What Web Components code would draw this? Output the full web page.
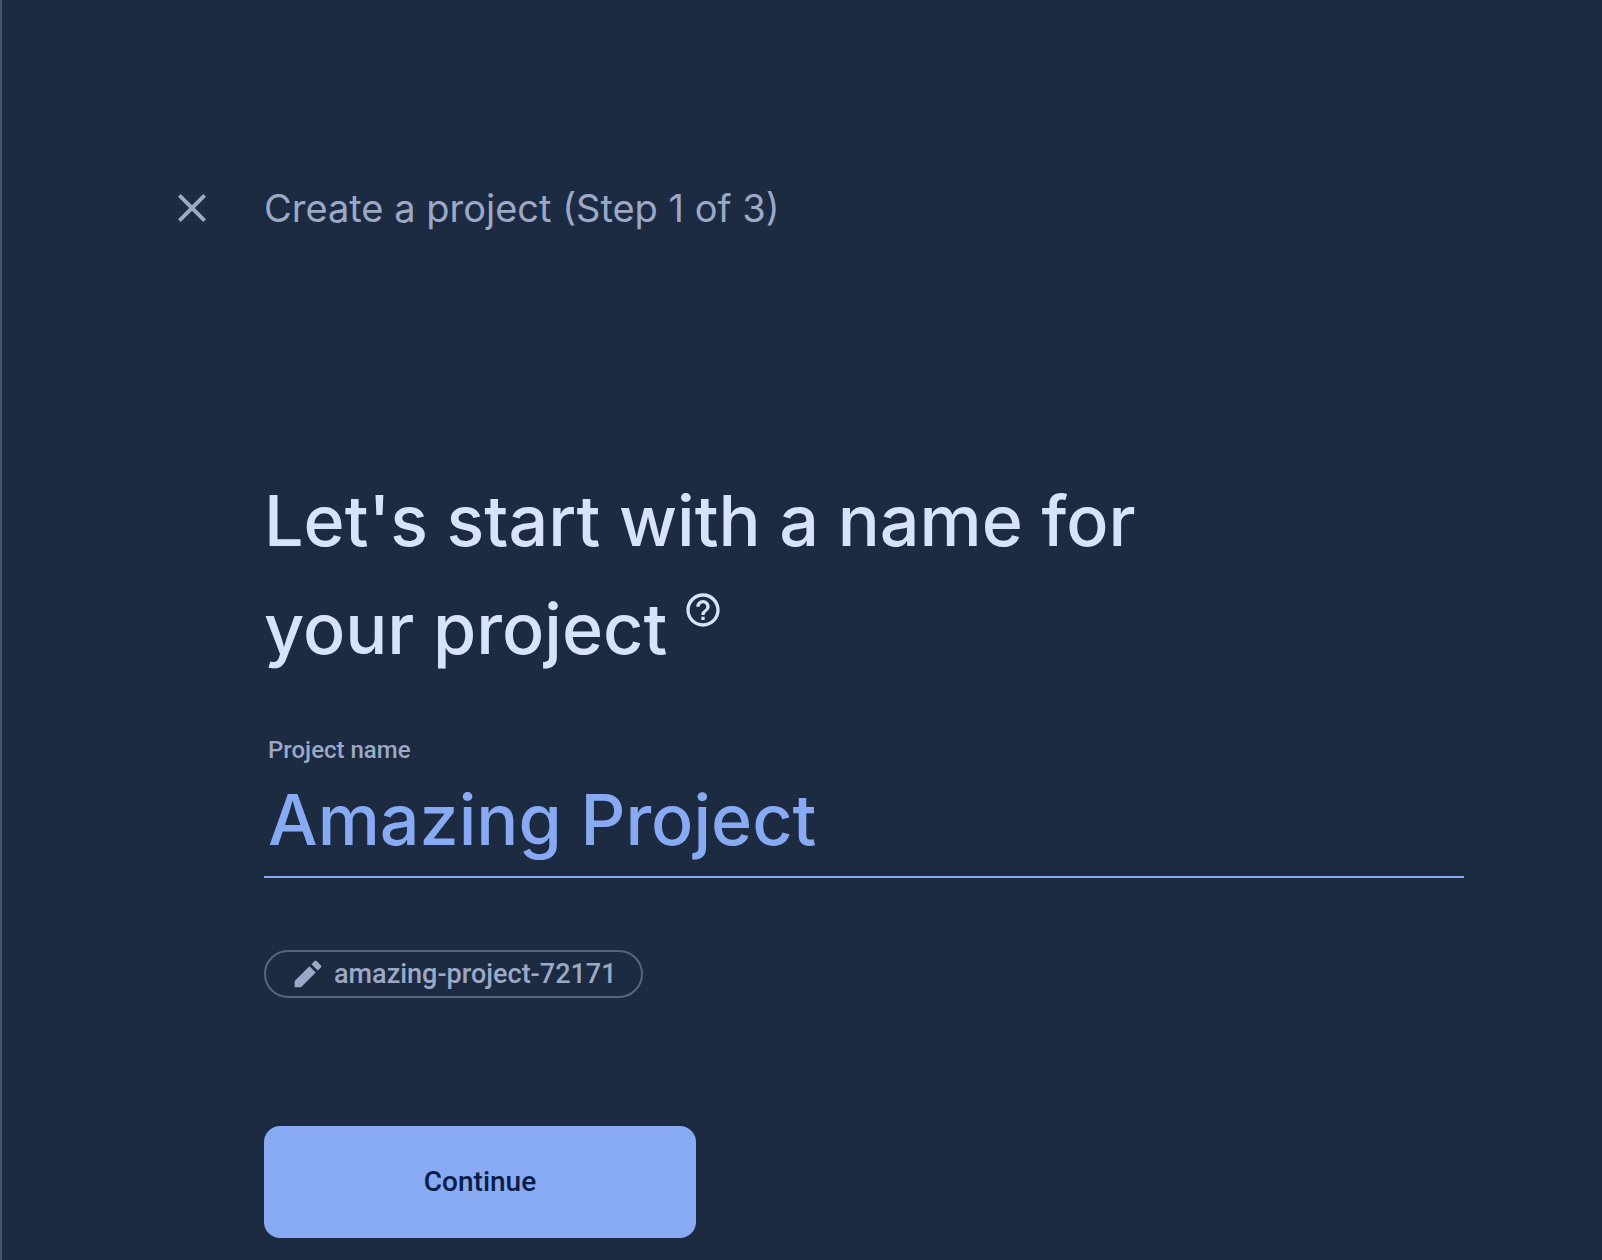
<!DOCTYPE html>
<html lang="en">
<head>
<meta charset="utf-8">
<title>Create a project</title>
<style>
  html { background: #1c2b42; }
  body {
    margin: 0;
    min-height: 100vh;
    box-sizing: border-box;
    border-left: 2px solid #47566d;
    color: #9ba9c6;
    font-family: Roboto, "Liberation Sans", sans-serif;
    --display: Inter, "Open Sans", sans-serif;
    --accent: #87aaf2;
    --heading: #d7e2fd;
    --outline: #56657f;
    --on-accent: #0a1d48;
  }
</style>
</head>
<body>
<create-project-page></create-project-page>
<script>
  const define = (name, html, init) => {
    const template = document.createElement('template');
    template.innerHTML = html;
    customElements.define(name, class extends HTMLElement {
      constructor() {
        super();
        const root = this.attachShadow({ mode: 'open' });
        root.append(template.content.cloneNode(true));
      }
      connectedCallback() { if (init) init(this, this.shadowRoot); }
    });
  };

  define('step-header', `
    <style>
      :host { display: flex; align-items: center; gap: 48px; }
      button { display: flex; padding: 0; border: 0; background: none; color: inherit; cursor: pointer; }
      svg { width: 48px; height: 48px; fill: currentColor; }
      h1 { margin: 0; font: 400 38px/48px var(--display); }
    </style>
    <button type="button" aria-label="Close">
      <svg viewBox="0 0 24 24" aria-hidden="true"><path d="M19 6.41L17.59 5 12 10.59 6.41 5 5 6.41 10.59 12 5 17.59 6.41 19 12 13.41 17.59 19 19 17.59 13.41 12z"/></svg>
    </button>
    <h1><slot></slot></h1>`);

  define('page-question', `
    <style>
      :host { display: block; color: var(--heading); }
      h2 { margin: 0; max-width: 912px; font: 500 70px/108px var(--display); }
      button { display: inline-flex; vertical-align: top; margin: 15px 0 0 -3px; padding: 0; border: 0; background: none; color: inherit; cursor: pointer; }
      svg { width: 40px; height: 40px; fill: currentColor; }
    </style>
    <h2><slot></slot>
      <button type="button" aria-label="Help"><svg viewBox="0 0 24 24" aria-hidden="true"><path d="M11 18h2v-2h-2v2zm1-16C6.48 2 2 6.48 2 12s4.48 10 10 10 10-4.48 10-10S17.52 2 12 2zm0 18c-4.410 0-8-3.590-8-8s3.590-8 8-8 8 3.590 8 8-3.590 8-8 8zm0-14c-2.210 0-4 1.790-4 4h2c0-1.100.9-2 2-2s2 .9 2 2c0 2-3 1.750-3 5h2c0-2.250 3-2.500 3-5 0-2.210-1.790-4-4-4z"/></svg></button>
    </h2>`);

  define('text-field', `
    <style>
      :host { display: flex; flex-direction: column; border-bottom: 2px solid var(--accent); }
      label { padding: 0 4px; font-size: 24px; line-height: 32px; font-weight: 500; }
      input { width: 100%; height: 110px; box-sizing: border-box; margin: 0; padding: 0 4px 4px; border: 0; outline: 0; background: none; color: var(--accent); font: 500 70px/106px var(--display); }
    </style>
    <label for="field"></label>
    <input id="field" type="text" autocomplete="off" spellcheck="false">`,
    (host, root) => {
      root.querySelector('label').textContent = host.getAttribute('label');
      root.querySelector('input').value = host.getAttribute('value');
    });

  define('id-chip', `
    <style>
      :host { display: flex; }
      button { display: flex; align-items: center; gap: 10px; height: 48px; padding: 0 24px 0 26px; border: 2px solid var(--outline); border-radius: 24px; background: none; color: inherit; font: 500 27px/32px Roboto, sans-serif; cursor: pointer; }
      svg { width: 32px; height: 32px; fill: currentColor; }
    </style>
    <button type="button">
      <svg viewBox="0 0 24 24" aria-hidden="true"><path d="M2 17.250V22h4.750L17.810 10.940l-4.750-4.750L2 17.250zM21.710 7.040a1 1 0 0 0 0-1.410l-3.340-3.340a1 1 0 0 0-1.410 0l-2.330 2.330 4.750 4.750 2.330-2.330z"/></svg>
      <span><slot></slot></span>
    </button>`);

  define('primary-button', `
    <style>
      :host { display: flex; }
      button { width: 432px; height: 112px; border: 0; border-radius: 16px; background: var(--accent); color: var(--on-accent); font: 500 28px/40px Roboto, sans-serif; cursor: pointer; }
    </style>
    <button type="button"><slot></slot></button>`);

  define('create-project-page', `
    <style>
      :host { display: block; padding: 184px 138px 22px 166px; }
      form { display: flex; flex-direction: column; margin: 235px 0 0 96px; }
      text-field { margin-top: 51px; }
      id-chip { margin-top: 72px; }
      primary-button { margin-top: 128px; }
    </style>
    <step-header>Create a project (Step 1 of 3)</step-header>
    <form>
      <page-question>Let's start with a name for your project</page-question>
      <text-field label="Project name" value="Amazing Project"></text-field>
      <id-chip>amazing-project-72171</id-chip>
      <primary-button>Continue</primary-button>
    </form>`);
</script>
</body>
</html>
